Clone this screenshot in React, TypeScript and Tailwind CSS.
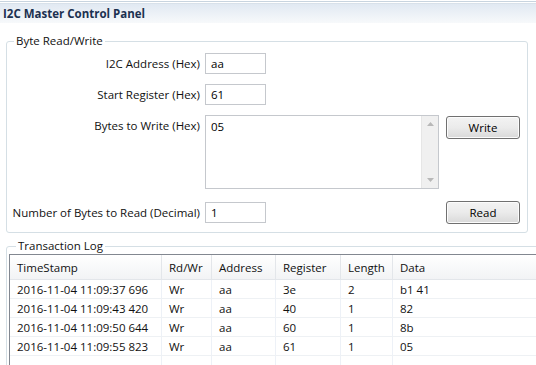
import React from 'react';

const rows = [
  { ts: '2016-11-04 11:09:37 696', rw: 'Wr', addr: 'aa', reg: '3e', len: '2', data: 'b1 41' },
  { ts: '2016-11-04 11:09:43 420', rw: 'Wr', addr: 'aa', reg: '40', len: '1', data: '82' },
  { ts: '2016-11-04 11:09:50 644', rw: 'Wr', addr: 'aa', reg: '60', len: '1', data: '8b' },
  { ts: '2016-11-04 11:09:55 823', rw: 'Wr', addr: 'aa', reg: '61', len: '1', data: '05' },
];

const cols = ['w-[152px]', 'w-[50px]', 'w-[64px]', 'w-[65px]', 'w-[52px]', 'w-[150px]'];
const heads = ['TimeStamp', 'Rd/Wr', 'Address', 'Register', 'Length', 'Data'];

const Button: React.FC<{ label: string }> = ({ label }) => (
  <button className="w-[74px] h-[23px] rounded-[3px] border border-[#707070] bg-gradient-to-b from-[#f3f3f3] via-[#ebebeb] to-[#d9d9d9] text-[11.5px] text-black shadow-[inset_0_0_0_1px_#fcfcfc]">
    {label}
  </button>
);

const TextInput: React.FC<{ value: string }> = ({ value }) => (
  <div className="w-[61px] h-[21px] border border-[#c5c8cd] bg-white px-[5px] leading-[19px] text-black">
    {value}
  </div>
);

export default function App() {
  return (
    <div className="w-[536px] h-[365px] overflow-hidden bg-white text-[11.5px] text-[#111] whitespace-nowrap" style={{ fontFamily: '"Open Sans", "Noto Sans", sans-serif' }}>
      {/* Form header */}
      <div className="h-px mt-px bg-[#c8d4df]" />
      <div className="h-px mt-px bg-[#d8e1ea]" />
      <div className="h-[19px] bg-gradient-to-b from-[#e1e9f2] to-[#f7f9fb] px-[3px] leading-[19px] font-bold text-[11.5px] text-[#1c3150]">
        I2C Master Control Panel
      </div>

      {/* Byte Read/Write group */}
      <fieldset className="mt-[10px] ml-[6px] w-[522px] border border-[#d5dfe5] rounded-[3px] pb-[8px]">
        <legend className="ml-[7px] px-[2px] leading-[16px]">Byte Read/Write</legend>

        <div className="flex items-center mt-[4px] h-[21px]">
          <div className="w-[193px] text-right">I2C Address (Hex)</div>
          <div className="ml-[5px]"><TextInput value="aa" /></div>
        </div>

        <div className="flex items-center mt-[10px] h-[21px]">
          <div className="w-[193px] text-right">Start Register (Hex)</div>
          <div className="ml-[5px]"><TextInput value="61" /></div>
        </div>

        <div className="flex items-start mt-[10px]">
          <div className="w-[193px] text-right pt-[2px]">Bytes to Write (Hex)</div>
          <div className="ml-[5px] w-[234px] h-[74px] border border-[#c5c8cd] flex">
            <div className="flex-1 px-[5px] pt-[2px] text-black">05</div>
            <div className="w-[17px] bg-[#f0f0f0] border-l border-[#e6e6e6] flex flex-col items-center justify-between py-[6px]">
              <svg width="7" height="4" viewBox="0 0 7 4"><path d="M0 4 L3.5 0 L7 4 Z" fill="#b8b8b8" /></svg>
              <svg width="7" height="4" viewBox="0 0 7 4"><path d="M0 0 L3.5 4 L7 0 Z" fill="#b8b8b8" /></svg>
            </div>
          </div>
          <div className="ml-[7px] mt-[1px]"><Button label="Write" /></div>
        </div>

        <div className="flex items-center mt-[12px] h-[23px]">
          <div className="w-[193px] text-right">Number of Bytes to Read (Decimal)</div>
          <div className="ml-[5px] w-[234px]"><TextInput value="1" /></div>
          <div className="ml-[7px]"><Button label="Read" /></div>
        </div>
      </fieldset>

      {/* Transaction Log group */}
      <fieldset className="mt-[5px] ml-[6px] w-[560px] border border-[#d5dfe5] rounded-[3px] pl-[2px]">
        <legend className="ml-[7px] px-[2px] leading-[16px]">Transaction Log</legend>
        <div className="border-t border-l border-[#828790] w-[560px]">
          <div className="flex h-[25px] bg-gradient-to-b from-[#ffffff] to-[#f2f3f5] border-b border-[#e3e6ea]">
            {heads.map((h, i) => (
              <div key={h} className={`${cols[i]} px-[7px] leading-[25px] border-r border-[#e3e6ea]`}>{h}</div>
            ))}
          </div>
          {rows.map((r) => (
            <div key={r.ts} className="flex h-[19px] border-b border-[#eef1f4]">
              {[r.ts, r.rw, r.addr, r.reg, r.len, r.data].map((c, i) => (
                <div key={i} className={`${cols[i]} px-[7px] leading-[19px] border-r border-[#edf1f7]`}>{c}</div>
              ))}
            </div>
          ))}
          <div className="flex h-[19px]">
            {cols.map((c, i) => (
              <div key={i} className={`${c} border-r border-[#edf1f7]`} />
            ))}
          </div>
        </div>
      </fieldset>
    </div>
  );
}
